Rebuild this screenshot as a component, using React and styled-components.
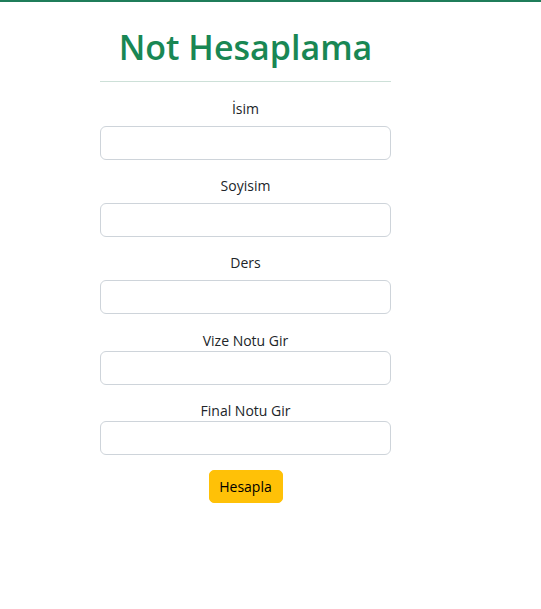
import React from 'react';
import styled, { createGlobalStyle } from 'styled-components';

const GlobalStyle = createGlobalStyle`
  html, body {
    margin: 0;
    padding: 0;
    background: #fff;
  }
  body {
    font-family: "Open Sans", "Noto Sans", sans-serif;
    color: #212529;
  }
`;

const fields = [
  { label: 'İsim', gap: 7, top: 0 },
  { label: 'Soyisim', gap: 7, top: 0 },
  { label: 'Ders', gap: 7, top: 0 },
  { label: 'Vize Notu Gir', gap: 0, top: 1 },
  { label: 'Final Notu Gir', gap: 0, top: 0 },
];

function App() {
  return (
    <>
      <GlobalStyle />
      <Page>
        <Form onSubmit={(e) => e.preventDefault()}>
          <Title>Not Hesaplama</Title>
          <Divider />
          {fields.map((f) => (
            <Group key={f.label}>
              <Label gap={f.gap} top={f.top}>{f.label}</Label>
              <Input type="text" />
            </Group>
          ))}
          <Button type="submit">Hesapla</Button>
        </Form>
      </Page>
    </>
  );
}

const Page = styled.div`
  border-top: 2px solid #1f7d5a;
  min-height: 607px;
`;

const Form = styled.form`
  width: 291px;
  margin-left: 100px;
  display: flex;
  flex-direction: column;
  align-items: center;
`;

const Title = styled.h1`
  margin: 22px 0 0;
  font-size: 34px;
  line-height: 47px;
  font-weight: 600;
  color: #198754;
  text-align: center;
`;

const Divider = styled.hr`
  width: 100%;
  margin: 10px 0 16px;
  border: 0;
  border-top: 1px solid #cde0d8;
`;

const Group = styled.div`
  width: 100%;
  display: flex;
  flex-direction: column;
  align-items: center;
  margin-bottom: 15px;
`;

const Label = styled.label`
  font-size: 14px;
  line-height: 21px;
  margin-top: ${(p) => p.top}px;
  margin-bottom: ${(p) => p.gap}px;
`;

const Input = styled.input`
  box-sizing: border-box;
  width: 100%;
  height: 34px;
  border: 1px solid #ced4da;
  border-radius: 6px;
  background: #fff;
  padding: 6px 12px;
  font-size: 14px;
  font-family: inherit;
  outline: none;
`;

const Button = styled.button`
  box-sizing: border-box;
  width: 74px;
  height: 33px;
  border: 1px solid #ffc107;
  border-radius: 5px;
  background: #ffc107;
  color: #000;
  font-family: inherit;
  font-size: 14px;
  padding: 0;
  cursor: pointer;
`;

export default App;
